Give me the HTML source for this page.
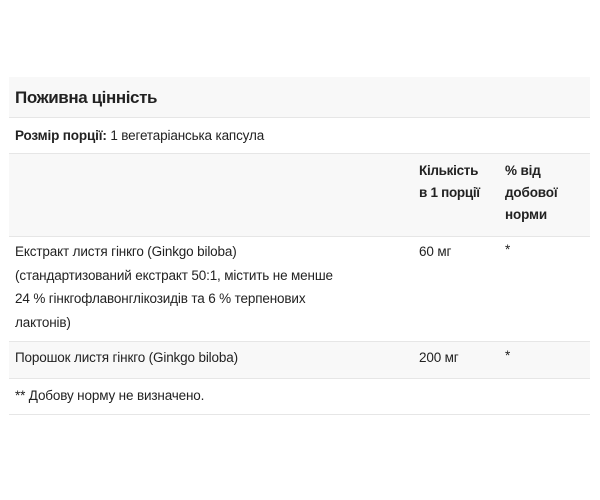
<!DOCTYPE html>
<html><head><meta charset="utf-8"><style>
body{margin:0;background:#fff;font-family:"Liberation Sans",sans-serif;color:#222;}
.t{position:absolute;left:9px;top:77px;width:581px;}
.r{position:relative;border-bottom:1px solid #e6e6e6;}
.g{background:#f8f8f8;}
.a{position:absolute;font-size:13.5px;letter-spacing:-0.15px;line-height:23.5px;}
</style></head><body>
<div class="t">
<div class="r g" style="height:40px"><div class="a" style="left:6px;top:9px;font-size:17px;font-weight:bold;letter-spacing:-0.4px">Поживна цінність</div></div>
<div class="r" style="height:35px"><div class="a" style="left:6px;top:6px"><b>Розмір порції:</b> 1 вегетаріанська капсула</div></div>
<div class="r g" style="height:82px"><div class="a" style="left:410px;top:6px;font-weight:bold;line-height:22px;letter-spacing:-0.3px">Кількість<br>в 1 порції</div><div class="a" style="left:496px;top:6px;font-weight:bold;line-height:22px">% від<br>добової<br>норми</div></div>
<div class="r" style="height:104px"><div class="a" style="left:6px;top:3px">Екстракт листя гінкго (Ginkgo biloba)<br>(стандартизований екстракт 50:1, містить не менше<br>24 % гінкгофлавонглікозидів та 6 % терпенових<br>лактонів)</div><div class="a" style="left:410px;top:3px">60 мг</div><div class="a" style="left:496px;top:1px">*</div></div>
<div class="r g" style="height:36px"><div class="a" style="left:6px;top:4px">Порошок листя гінкго (Ginkgo biloba)</div><div class="a" style="left:410px;top:4px">200 мг</div><div class="a" style="left:496px;top:2px">*</div></div>
<div class="r" style="height:35px"><div class="a" style="left:6px;top:5px">** Добову норму не визначено.</div></div>
</div>
</body></html>
